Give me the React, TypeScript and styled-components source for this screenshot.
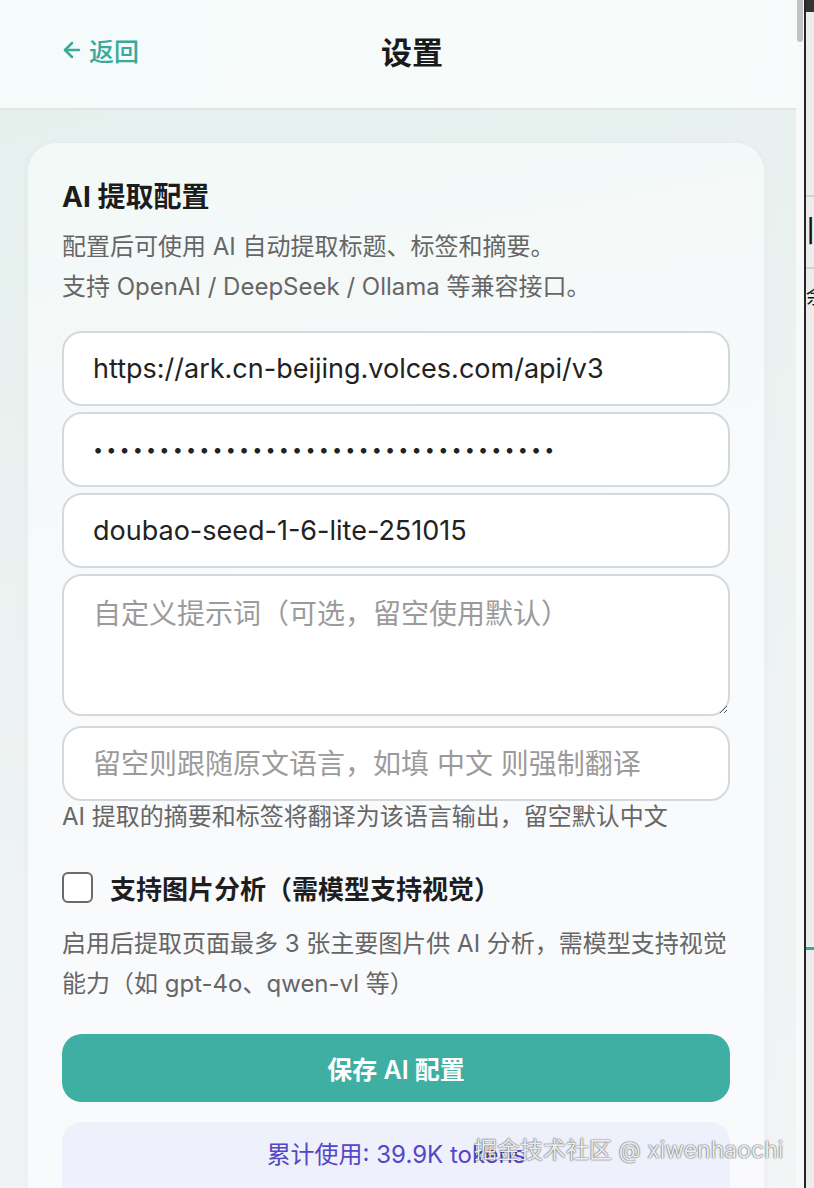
import { ArrowLeft } from "lucide-react";
import styled, { createGlobalStyle } from "styled-components";

const GlobalStyle = createGlobalStyle`
  html, body {
    margin: 0;
    padding: 0;
    overflow: hidden;
  }
  body {
    font-family: "Inter", "Noto Sans CJK SC", sans-serif;
    color: #1f1f1f;
  }
  * {
    box-sizing: border-box;
  }
`;

const Screen = styled.div`
  position: relative;
  display: flex;
  width: 814px;
  height: 1188px;
  overflow: hidden;
`;

const Popup = styled.div`
  width: 796px;
  height: 1188px;
  display: flex;
  flex-direction: column;
  background: linear-gradient(165deg, #e4f0ed 0%, #ecf2f1 45%, #f2f4f6 100%);
`;

const Header = styled.header`
  height: 110px;
  flex-shrink: 0;
  display: grid;
  grid-template-columns: 1fr auto 1fr;
  align-items: center;
  padding: 0 34px 8px 62px;
  background: linear-gradient(100deg, #f5fbfa 0%, #f8fbfb 100%);
  border-bottom: 2px solid #dfe6e4;
`;

const BackLink = styled.a`
  display: flex;
  align-items: center;
  gap: 5px;
  justify-self: start;
  margin-left: -2px;
  color: #3aa99a;
  font-size: 25px;
  font-weight: 500;
  text-decoration: none;
  cursor: pointer;
`;

const Title = styled.h1`
  margin: 0;
  font-size: 31px;
  font-weight: 700;
  color: #1a1a1a;
`;

const Card = styled.section`
  margin: 33px 32px 0 28px;
  padding: 34px 34px 0 34px;
  border-radius: 28px;
  background: linear-gradient(170deg, #f2f9f7 0%, #f8fafb 40%, #fafafc 100%);
  box-shadow: 0 2px 10px rgba(40, 80, 70, 0.04);
  flex: 1;
`;

const CardTitle = styled.h2`
  margin: 0;
  font-size: 28px;
  line-height: 40px;
  font-weight: 700;
  color: #1c1c1c;
`;

const Desc = styled.p`
  margin: 10px 0 0;
  font-size: 24px;
  line-height: 40px;
  color: #666;
`;

const Fields = styled.div`
  display: flex;
  flex-direction: column;
  gap: 6px;
  margin-top: 24px;
`;

const fieldBase = `
  width: 100%;
  border: 2px solid #d6d9dc;
  border-radius: 20px;
  background: #fff;
  font-family: "Inter", "Noto Sans CJK SC", sans-serif;
  color: #222;
  outline: none;
  padding: 0 29px;
  &::placeholder {
    color: #9b9b9b;
  }
`;

const Input = styled.input<{ $size?: number; $spacing?: number }>`
  ${fieldBase}
  height: 75px;
  font-size: ${(p) => p.$size ?? 27}px;
  letter-spacing: ${(p) => p.$spacing ?? 0}px;
`;

const TextArea = styled.textarea`
  ${fieldBase}
  height: 142px;
  margin-bottom: 4px;
  padding-top: 18px;
  font-size: 28px;
  line-height: 40px;
  resize: vertical;
`;

const Hint = styled.p<{ $top?: number }>`
  margin: ${(p) => p.$top ?? 0}px 0 0;
  font-size: 24px;
  line-height: ${(p) => (p.$top ? 40 : 32)}px;
  color: #666;
`;

const CheckRow = styled.label`
  display: flex;
  align-items: center;
  gap: 17px;
  margin-top: 39px;
  height: 30px;
  cursor: pointer;
`;

const Box = styled.span`
  width: 31px;
  height: 31px;
  border: 2px solid #6a6a6a;
  border-radius: 6px;
  background: #fff;
  flex-shrink: 0;
`;

const CheckLabel = styled.span`
  font-size: 26px;
  font-weight: 600;
  color: #1e1e1e;
`;

const SaveButton = styled.button`
  display: block;
  width: 100%;
  height: 68px;
  margin-top: 30px;
  border: none;
  border-radius: 20px;
  background: #3eafa2;
  color: #fff;
  font-family: "Inter", "Noto Sans CJK SC", sans-serif;
  font-size: 25px;
  font-weight: 600;
  cursor: pointer;
`;

const Usage = styled.div`
  margin-top: 20px;
  height: 90px;
  padding-top: 14px;
  border-radius: 20px;
  background: #eef0fb;
  text-align: center;
  font-size: 24px;
  line-height: 38px;
  color: #5447c6;
`;

const ScrollTrack = styled.div`
  width: 8px;
  background: #f7faf9;
  padding: 0 1px;
`;

const Thumb = styled.div`
  height: 42px;
  border-radius: 0 0 4px 4px;
  background: #c2c4c4;
`;

const Divider = styled.div`
  width: 2px;
  background: #262626;
`;

const BackPage = styled.div`
  width: 8px;
  display: flex;
  flex-direction: column;
  background: #ededed;
  overflow: hidden;
`;

const BackBar = styled.div`
  height: 12px;
  background: #343434;
`;

const BackRule = styled.div<{ $top: number }>`
  margin-top: ${(p) => p.$top}px;
  height: 2px;
  background: #d2d2d2;
`;

const BackGlyph = styled.span<{ $top: number; $size: number }>`
  display: block;
  margin-top: ${(p) => p.$top}px;
  font-size: ${(p) => p.$size}px;
  line-height: 1;
  color: #111;
  white-space: nowrap;
`;

const BackMark = styled.div`
  margin-top: 640px;
  width: 8px;
  height: 3px;
  background: #3aa99a;
`;

const Watermark = styled.div`
  position: absolute;
  left: 474px;
  top: 1134px;
  font-size: 23px;
  line-height: 32px;
  color: rgba(255, 255, 255, 0.92);
  text-shadow: 0 0 1px rgba(0, 0, 0, 0.7), 0 0 2px rgba(0, 0, 0, 0.45);
  white-space: nowrap;
  pointer-events: none;
`;

export default function App() {
  return (
    <>
      <GlobalStyle />
      <Screen>
        <Popup>
          <Header>
            <BackLink>
              <ArrowLeft size={24} strokeWidth={2.5} />
              返回
            </BackLink>
            <Title>设置</Title>
            <span />
          </Header>

          <Card>
            <CardTitle>AI 提取配置</CardTitle>
            <Desc>
              配置后可使用 AI 自动提取标题、标签和摘要。
              <br />
              支持 OpenAI / DeepSeek / Ollama 等兼容接口。
            </Desc>

            <Fields>
              <Input readOnly value="https://ark.cn-beijing.volces.com/api/v3" />
              <Input $size={18} $spacing={3.15} type="password" readOnly value={"x".repeat(35)} />
              <Input readOnly value="doubao-seed-1-6-lite-251015" />
              <TextArea placeholder="自定义提示词（可选，留空使用默认）" />
              <Input $size={28} placeholder="留空则跟随原文语言，如填 中文 则强制翻译" />
            </Fields>
            <Hint>AI 提取的摘要和标签将翻译为该语言输出，留空默认中文</Hint>

            <CheckRow>
              <Box />
              <CheckLabel>支持图片分析（需模型支持视觉）</CheckLabel>
            </CheckRow>
            <Hint $top={22}>
              启用后提取页面最多 3 张主要图片供 AI 分析，需模型支持视觉
              <br />
              能力（如 gpt-4o、qwen-vl 等）
            </Hint>

            <SaveButton>保存 AI 配置</SaveButton>
            <Usage>累计使用: 39.9K tokens</Usage>
          </Card>
        </Popup>

        <ScrollTrack>
          <Thumb />
        </ScrollTrack>
        <Divider />
        <BackPage>
          <BackBar />
          <BackRule $top={183} />
          <BackGlyph $top={18} $size={30}>旧</BackGlyph>
          <BackRule $top={22} />
          <BackGlyph $top={18} $size={20}>余</BackGlyph>
          <BackMark />
        </BackPage>

        <Watermark>掘金技术社区 @ xiwenhaochi</Watermark>
      </Screen>
    </>
  );
}
